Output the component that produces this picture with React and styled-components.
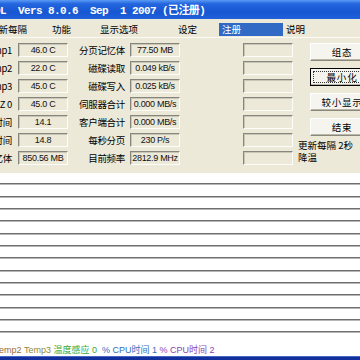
import React from "react";
import styled, { createGlobalStyle } from "styled-components";

const GlobalStyle = createGlobalStyle`
  html, body {
    margin: 0;
    padding: 0;
    overflow: hidden;
    background: #fff;
  }
`;

const cjk = `"Noto Sans CJK SC", "Liberation Sans", sans-serif`;
const latin = `"Liberation Sans", "Noto Sans CJK SC", sans-serif`;

const Window = styled.div`
  width: 360px;
  height: 360px;
  display: flex;
  flex-direction: column;
  overflow: hidden;
`;

const TitleBar = styled.div`
  height: 19px;
  box-sizing: border-box;
  padding-top: 4px;
  background: linear-gradient(to bottom, #5a9af5 0%, #2466de 20%, #1656d2 65%, #2060da 100%);
  color: #fff;
  font-family: "Liberation Mono", "Noto Sans CJK SC", monospace;
  font-weight: bold;
  font-size: 11px;
  letter-spacing: -0.6px;
  line-height: 15px;
  white-space: pre;
  overflow: hidden;
`;

const TitleText = styled.span`
  display: inline-block;
  margin-left: -36px;
`;

const MenuBar = styled.div`
  height: 19px;
  box-sizing: border-box;
  padding-top: 4px;
  background: #ece9d8;
  border-bottom: 1px solid #fbfaf4;
  display: flex;
  font-family: ${cjk};
  font-size: 9.5px;
`;

const MenuItem = styled.div`
  flex: none;
  width: ${(p) => p.$w}px;
  margin-left: ${(p) => p.$shift || 0}px;
  height: 13px;
  line-height: 13px;
  padding-left: 3px;
  box-sizing: border-box;
  white-space: nowrap;
  background: ${(p) => (p.$active ? "#316ac5" : "transparent")};
  color: ${(p) => (p.$active ? "#fff" : "#000")};
`;

const Content = styled.div`
  height: 135px;
  box-sizing: border-box;
  padding-top: 5px;
  background: #ece9d8;
  display: flex;
  gap: 5px;
`;

const Grid = styled.div`
  display: grid;
  grid-template-columns: 14px 50px 54px 50px 55px 50px;
  grid-auto-rows: 14px;
  column-gap: 4px;
  row-gap: 4px;
  align-content: start;
`;

const Label = styled.div`
  display: flex;
  justify-content: flex-end;
  align-items: center;
  white-space: nowrap;
  padding-right: ${(p) => (p.$edge ? 2 : 1)}px;
  font-family: ${cjk};
  font-size: 9.5px;
  letter-spacing: -0.3px;
  color: #000;
`;

const Field = styled.div`
  box-sizing: border-box;
  border: 1px solid;
  border-color: #87867e #fdfdfa #fdfdfa #87867e;
  box-shadow: inset 1px 1px 0 #c9c6b6;
  background: #ece9d8;
  font-family: ${latin};
  font-size: 9px;
  letter-spacing: -0.3px;
  line-height: 12px;
  text-align: center;
  white-space: nowrap;
  overflow: hidden;
  color: #111;
`;

const RightCol = styled.div`
  width: 61px;
  display: flex;
  flex-direction: column;
`;

const ButtonStack = styled.div`
  display: flex;
  flex-direction: column;
  gap: 7px;
  margin-left: 12px;
`;

const Button = styled.div`
  width: 64px;
  height: 18px;
  box-sizing: border-box;
  border: 1px solid;
  border-color: ${(p) => (p.$focused ? "#000" : "#fff #8a887c #8a887c #fff")};
  box-shadow: inset -1px -1px 0 #b9b6a6;
  background: #f5f4ee;
  font-family: ${cjk};
  font-size: 9.5px;
  letter-spacing: 0.8px;
  line-height: 16px;
  text-align: center;
  white-space: nowrap;
  outline: ${(p) => (p.$focused ? "1px dotted #333" : "none")};
  outline-offset: -4px;
`;

const Note = styled.div`
  margin-top: 4px;
  font-family: ${cjk};
  font-size: 9.5px;
  line-height: 11.5px;
  white-space: nowrap;
  color: #000;
`;

const List = styled.div`
  height: 160.3px;
  flex: none;
  background: #fff;
`;

const Rule = styled.div`
  height: 12.33px;
  box-sizing: border-box;
  border-bottom: 1px solid #b6b6b6;
  box-shadow: inset 0 -1px 0 #6f6f6f;
`;

const Status = styled.div`
  flex: 1;
  background: #fff;
  display: flex;
  align-items: flex-end;
  font-family: ${latin};
  font-size: 9px;
  line-height: 12px;
  white-space: pre;
`;

const Legend = styled.span`
  color: ${(p) => p.$color};
  margin-left: ${(p) => p.$shift || 0}px;
`;

const BottomBar = styled.div`
  height: 3px;
  flex: none;
  background: #12309c;
  border-top: 1px solid #4a66c4;
`;

const menu = [
  { text: "更新每隔", w: 63, shift: -14 },
  { text: "功能", w: 48 },
  { text: "显示选项", w: 78 },
  { text: "设定", w: 44 },
  { text: "注册", w: 64, active: true },
  { text: "说明", w: 60 },
];

const rows = [
  ["Temp1", "46.0 C", "分页记忆体", "77.50 MB"],
  ["Temp2", "22.0 C", "磁碟读取", "0.049 kB/s"],
  ["Temp3", "45.0 C", "磁碟写入", "0.025 kB/s"],
  ["HD Z 0", "45.0 C", "伺服器合计", "0.000 MB/s"],
  ["CPU时间", "14.1", "客户端合计", "0.000 MB/s"],
  ["CPU时间", "14.8", "每秒分页", "230 P/s"],
  ["记忆体", "850.56 MB", "目前频率", "2812.9 MHz"],
];

const buttons = [
  { text: "组态" },
  { text: "最小化", focused: true },
  { text: "较小显示" },
  { text: "结束" },
];

export default function App() {
  return (
    <Window>
      <GlobalStyle />
      <TitleBar>
        <TitleText>CPUCOOL  Vers 8.0.6  Sep  1 2007 (已注册)</TitleText>
      </TitleBar>
      <MenuBar>
        {menu.map((m) => (
          <MenuItem key={m.text} $w={m.w} $shift={m.shift} $active={m.active}>
            {m.text}
          </MenuItem>
        ))}
      </MenuBar>
      <Content>
        <Grid>
          {rows.map((r, i) => (
            <React.Fragment key={i}>
              <Label $edge>{r[0]}</Label>
              <Field>{r[1]}</Field>
              <Label>{r[2]}</Label>
              <Field>{r[3]}</Field>
              <Label />
              <Field />
            </React.Fragment>
          ))}
        </Grid>
        <RightCol>
          <ButtonStack>
            {buttons.map((b) => (
              <Button key={b.text} $focused={b.focused}>
                {b.text}
              </Button>
            ))}
          </ButtonStack>
          <Note>
            更新每隔 2秒
            <br />
            降温
          </Note>
        </RightCol>
      </Content>
      <List>
        {Array.from({ length: 13 }).map((_, i) => (
          <Rule key={i} />
        ))}
      </List>
      <Status>
        <Legend $color="#9a6b3c" $shift={-5.5}>Temp2 </Legend>
        <Legend $color="#8c8a3e">Temp3 </Legend>
        <Legend $color="#35a935">温度感应 0  </Legend>
        <Legend $color="#2f6fc2">% CPU时间 1 </Legend>
        <Legend $color="#8e3cba">% CPU时间 2</Legend>
      </Status>
      <BottomBar />
    </Window>
  );
}
